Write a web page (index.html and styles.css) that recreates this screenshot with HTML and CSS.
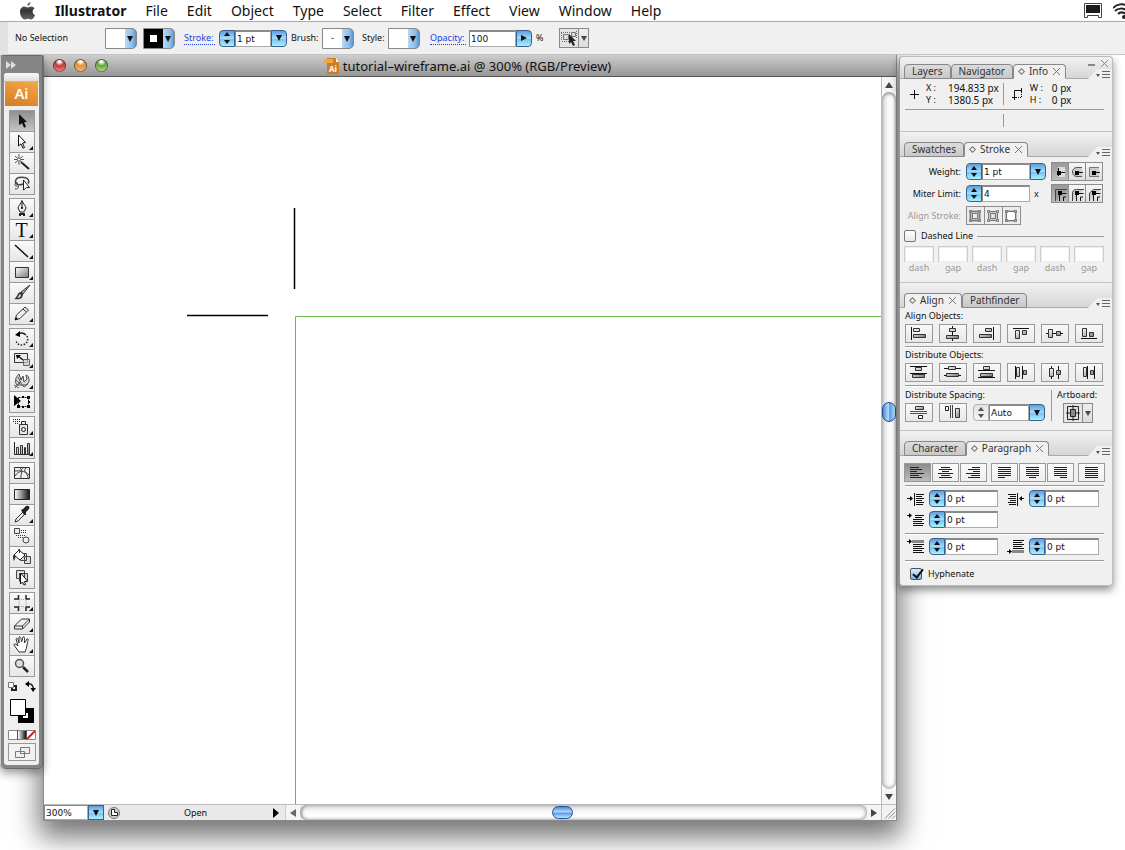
FILE: index.html
```html
<!DOCTYPE html>
<html lang="en">
<head>
<meta charset="utf-8">
<title>tutorial-wireframe.ai</title>
<link rel="stylesheet" href="styles.css">
</head>
<body>
<svg class="defs" aria-hidden="true">
  <defs>
    <linearGradient id="metal" x1="0" y1="0" x2="1" y2="1"><stop offset="0" stop-color="#fff"/><stop offset="1" stop-color="#777"/></linearGradient>
    <linearGradient id="fade"><stop offset="0" stop-color="#fff"/><stop offset="1" stop-color="#111"/></linearGradient>
    <linearGradient id="apple" x1="0" y1="0" x2="0" y2="1"><stop offset="0" stop-color="#777"/><stop offset=".5" stop-color="#333"/><stop offset="1" stop-color="#666"/></linearGradient>
  </defs>
</svg>

<header class="menubar">
  <button class="apple" aria-label="Apple menu"><svg width="17" height="18" viewBox="0 0 17 18"><path fill="url(#apple)" d="M11.500 0c.2 2-1.300 3.900-3.200 4C8 2.200 9.600.4 11.500 0zM12 4.500c1.500 0 2.700.7 3.500 1.900-2.800 1.700-2.300 5.400.6 6.600-.8 2-2.200 4.500-3.900 4.500-1.300 0-1.800-.8-3.300-.8s-2 .8-3.300.8C3.500 17.500 1 13.500 1 10s2.200-5.400 4.500-5.400c1.500 0 2.400.8 3.400.8s1.800-.9 3.100-.9z"/></svg></button>
  <nav class="menus">
    <button class="app-name">Illustrator</button><button>File</button><button>Edit</button><button>Object</button><button>Type</button><button>Select</button><button>Filter</button><button>Effect</button><button>View</button><button>Window</button><button>Help</button>
  </nav>
  <div class="status-icons">
    <svg width="18" height="16" viewBox="0 0 18 16"><path fill="#fff" stroke="#444" d="M.5.500h17v14h-3v-2h-11v2h-3z"/><path fill="#1c1c1c" d="M2 2h14v8H2z"/></svg>
    <svg width="12" height="16" viewBox="0 0 12 16" fill="none" stroke="#222" stroke-width="2"><path d="M0 5C4 1 10 0 15 3M2 8c3-3 8-3 11-1M5 11c2-2 5-2 8 0"/><circle cx="11" cy="14" r="1"/></svg>
  </div>
</header>

<section class="control-bar" aria-label="Control">
  <span class="selection">No Selection</span>
  <span class="pick swatch"><select aria-label="Fill"><option></option></select></span>
  <span class="pick swatch dark"><select aria-label="Stroke color"><option></option></select></span>
  <a class="dotted" href="#stroke">Stroke:</a>
  <span class="combo stroke-w"><span class="stepper"><button aria-label="Increase stroke"></button><button aria-label="Decrease stroke"></button></span><input aria-label="Stroke weight" value="1 pt"><button class="drop" aria-label="Stroke presets"></button></span>
  <label class="brush" for="brush">Brush:</label>
  <span class="pick swatch"><select id="brush"><option>-</option></select></span>
  <label class="style" for="style">Style:</label>
  <span class="pick swatch"><select id="style"><option></option></select></span>
  <a class="dotted opacity" href="#opacity">Opacity:</a>
  <span class="combo opacity-w"><input aria-label="Opacity" value="100"><button class="drop right" aria-label="Opacity slider"></button></span>
  <span class="percent">%</span>
  <button class="split" aria-label="Select similar objects"><svg width="18" height="18" viewBox="0 0 18 18"><path fill="#ddd" stroke="#777" d="M3.500 5.500h5v5h-5zM11.500 3.500h4v4h-4z"/><path stroke="#666" stroke-dasharray="1 1" d="M1 3.500h9M2 12.500h7M1.500 4v8M16.500 2v7"/><path fill="#222" d="m9 5 7 7-3 0 2 4-2 1-2-4-2 2z"/></svg><i></i></button>
</section>

<main class="workspace">
  <aside class="toolbox" aria-label="Tools">
    <div class="tool-head"><svg width="11" height="8" viewBox="0 0 11 8" fill="#ddd"><path d="m0 0 5 4-5 4zM5 0l5 4-5 4z"/></svg></div>
    <div class="tool-body">
      <div class="grip"></div>
      <div class="logo">Ai</div>
      <div class="tools">
        <button class="on" aria-label="Selection"><svg viewBox="0 0 24 20"><path fill="#111" d="m9 3 8 8-3 .3 2 4.500-2 1-2-4.500L9 14z"/></svg></button>
        <button class="more" aria-label="Direct Selection"><svg viewBox="0 0 24 20"><path fill="#fff" stroke="#111" d="m8.500 3 7 7.500-3 .5 2 4.500-1.500.7-2-4.400-2.500 2.200z"/></svg></button>
        <button aria-label="Magic Wand"><svg viewBox="0 0 24 20"><path stroke="#222" stroke-width="2" d="m11 9 8 7"/><path stroke="#555" d="M9 1v11M4 6.500h10M5 3l8 7M13 3l-8 7"/><circle cx="9" cy="6.500" r="1.500" fill="#fff" stroke="#777"/></svg></button>
        <button aria-label="Lasso"><svg viewBox="0 0 24 20" fill="none" stroke="#444"><path stroke-width="1.500" d="M13 10c-4 2-8 0-7.500-3C6 4 10 3 14 3.500s6 3 4 6"/><path d="M8 9c-4-1-4 4-1 3s1 4-2 3"/><path fill="#fff" stroke="#222" d="m13.500 6 6 7.500-3 0-3 2.500z"/></svg></button>
      </div>
      <div class="tools">
        <button class="more" aria-label="Pen"><svg viewBox="0 0 24 20"><path fill="#eee" stroke="#222" d="M12 1.500C13 5 16 7 16 9l-2 4h-4L8 9c0-2 3-4 4-7.500z"/><path stroke="#222" d="M12 3v6"/><circle cx="12" cy="9" r="1"/><path fill="#222" d="M9 14h6v3h-2v-1h-2v1H9z"/></svg></button>
        <button class="more type" aria-label="Type">T</button>
        <button class="more" aria-label="Line Segment"><svg viewBox="0 0 24 20"><path stroke="#111" stroke-width="1.500" d="m5 4 13 12"/></svg></button>
        <button class="more" aria-label="Rectangle"><svg viewBox="0 0 24 20"><path fill="url(#metal)" stroke="#333" d="M5.500 5.500h13v10h-13z"/></svg></button>
        <button aria-label="Paintbrush"><svg viewBox="0 0 24 20"><path fill="#aaa" stroke="#333" d="m20 2-9 7 2 2z"/><path fill="#333" d="M11 9c-4 0-3 5-7 7 5 1 9 0 9-5z"/><path fill="#ccc" d="M10 11c-2 1-1 3-3 4 3 0 4-1 4-3z"/></svg></button>
        <button class="more" aria-label="Pencil"><svg viewBox="0 0 24 20"><path fill="#eee" stroke="#333" d="m5 16 1.500-5L15 3l3.500 3L10 14.500z"/><path stroke="#333" fill="none" d="m13 5 3.500 3"/><path d="m5 16 1-3 2 2z"/></svg></button>
      </div>
      <div class="tools">
        <button class="more" aria-label="Rotate"><svg viewBox="0 0 24 20"><path fill="none" stroke="#222" stroke-width="1.500" d="M8 5c3-1.500 6-1 8 1"/><path fill="none" stroke="#222" stroke-width="1.500" stroke-dasharray="1.500 1.500" d="M17 7c4 9-10 13-11 4"/><path d="m5 6 5-4v6z"/></svg></button>
        <button class="more" aria-label="Scale"><svg viewBox="0 0 24 20"><path fill="#eee" stroke="#333" d="M4.500 3.500h13v9h-13z"/><path fill="#ccc" fill-opacity=".7" stroke="#666" d="M13.500 9.500h6v6h-6z"/><path stroke="#111" stroke-width="1.500" d="m8 6 5 4"/><path d="M6 5h5L7 9z"/></svg></button>
        <button class="more" aria-label="Warp"><svg viewBox="0 0 24 20"><path fill="#ddd" stroke="#444" d="M7 14c-3-4-1-8 2-11l2 6 2-4 1 6 3-3-1-4c4 1 4 8 0 10H9z"/><path fill="none" stroke="#555" d="m5 17 5-6 4 5 4-3M4 14l5 3M8 6l3 6M6 9l4 4"/></svg></button>
        <button aria-label="Free Transform"><svg viewBox="0 0 24 20"><path fill="none" stroke="#111" stroke-dasharray="2 1" d="M8.500 5.500h10v9h-10z"/><path d="M4 3v11l7-5zM17 4h3v3h-3zM12 4h2v2h-2zM17 13h3v3h-3zM12 14h2v2h-2zM18 9h2v2h-2zM7 13h3v3H7z"/></svg></button>
      </div>
      <div class="tools">
        <button class="more" aria-label="Symbol Sprayer"><svg viewBox="0 0 24 20"><path fill="#e6e6e6" stroke="#333" d="M9.500 7.500h8v10h-8zM11.500 4.500h4v3h-4z"/><circle cx="13.500" cy="12.500" r="2" fill="none" stroke="#222"/><path stroke="#222" stroke-dasharray="1 1" d="M3 2.500h8M3 4.500h8M5 6.500h3"/></svg></button>
        <button class="more" aria-label="Column Graph"><svg viewBox="0 0 24 20"><path fill="none" stroke="#222" d="M4.500 4v12.500H20"/><path fill="url(#metal)" stroke="#333" d="M6.500 9.500h2v7h-2zM10.500 7.500h2v9h-2zM14.500 9.500h1v7h-1zM17.500 5.500h2v11h-2z"/></svg></button>
      </div>
      <div class="tools">
        <button aria-label="Mesh"><svg viewBox="0 0 24 20"><path fill="#eee" stroke="#333" d="M4.500 4.500h15v11h-15z"/><path fill="none" stroke="#444" d="M5 13c4-6 9-6 14-1M10 5c4 3 0 7 1 10M16 5c-4 3 2 5 2 10M5 8c5 0 7-1 8-3"/></svg></button>
        <button aria-label="Gradient"><svg viewBox="0 0 24 20"><path fill="url(#fade)" stroke="#222" d="M4.500 5.500h15v10h-15z"/></svg></button>
        <button class="more" aria-label="Eyedropper"><svg viewBox="0 0 24 20"><path fill="#eee" stroke="#333" d="m5 17 1-3 7-7 2 2-7 7z"/><path fill="#222" d="m11 5 2-1 3-3c3-1 4 1 3 3l-3 3v3l-2 0z"/></svg></button>
        <button aria-label="Blend"><svg viewBox="0 0 24 20"><path fill="#eee" stroke="#444" d="M4.500 2.500h5v5h-5z"/><circle cx="16" cy="14" r="3" fill="#eee" stroke="#444"/><path stroke="#333" stroke-dasharray="1 1" d="M11 4.500h5M11 6.500h6M6 9.500h10M8 11.500h5"/></svg></button>
        <button aria-label="Live Paint Bucket"><svg viewBox="0 0 24 20"><path fill="#ddd" stroke="#444" d="M10.500 6.500h6v7h-6zM14.500 9.500h6v7h-6z"/><path fill="#fff" stroke="#222" d="m4 8 5-5 6 5-5 5z"/><path fill="#333" d="M3 8c0 3 0 4 1 6l2-5zM8 2h2v4H9V3z"/></svg></button>
        <button aria-label="Live Paint Selection"><svg viewBox="0 0 24 20"><path fill="#ddd" stroke="#444" d="M6.500 2.500h8v8h-8zM9.500 5.500h8v8h-8z"/><path fill="#fff" stroke="#111" d="m10.500 5 7 8-3 .5 1 3-1.500.5-1.500-3-2 2z"/></svg></button>
      </div>
      <div class="tools">
        <button class="more" aria-label="Crop Area"><svg viewBox="0 0 24 20"><path fill="none" stroke="#222" stroke-width="1.500" d="M4 6h4.500V2M20 6h-4V2M4 14h4.500v4M20 14h-4v4"/><path fill="none" stroke="#999" stroke-dasharray="1 1" d="M9 6.500h7v7H9z"/></svg></button>
        <button class="more" aria-label="Eraser"><svg viewBox="0 0 24 20"><path fill="#eee" stroke="#333" d="m4.500 12 7-7h8l-7 7zM4.500 12v3h8v-3M12.500 15l7-7V5"/></svg></button>
        <button class="more" aria-label="Hand"><svg viewBox="0 0 24 20"><path fill="#fff" stroke="#333" d="m9 17-5-7c0-2 2-1 4 1L6 4c1-2 2 0 3 4l0-6c1-1 2 0 2.500 5L13 2c2-1 1.500 1 1.500 6L17 4c2-1 1 1 0 6-.5 3-1 4-2 7z"/></svg></button>
        <button aria-label="Zoom"><svg viewBox="0 0 24 20"><path stroke="#222" stroke-width="2.500" d="m13 11 5 5"/><circle cx="9.500" cy="7.500" r="4" fill="#ddd" stroke="#555" stroke-width="1.500"/></svg></button>
      </div>
      <div class="swap">
        <button aria-label="Default Fill and Stroke"><svg width="11" height="11" viewBox="0 0 11 11"><path fill="#fff" stroke="#222" stroke-width="2" d="M5 5h4v4H5z"/><path fill="#fff" stroke="#777" d="M1.500 1.500h5v5h-5z"/></svg></button>
        <button aria-label="Swap Fill and Stroke"><svg width="11" height="11" viewBox="0 0 11 11"><path fill="none" stroke="#222" stroke-width="1.500" d="M2 3c4-1 6 1 6.500 5"/><path d="m0 3 4-3v6zM5.500 7h5.500l-3 4z"/></svg></button>
      </div>
      <button class="fill-stroke" aria-label="Fill and Stroke"><svg width="26" height="25" viewBox="0 0 26 25"><path d="M9 9h16v15H9z"/><path fill="#fff" d="M14 14h5v5h-5z"/><path fill="#fff" stroke="#000" d="M1.500.500h15v16h-15z"/></svg></button>
      <button class="modes" aria-label="Color, Gradient, None"><svg width="28" height="10" viewBox="0 0 28 10"><path fill="#fff" stroke="#888" d="M.5.500h27v9h-27z"/><path fill="url(#fade)" d="M10 1h8v8h-8z"/><path stroke="#c22" stroke-width="2" d="m19 9 8-8"/><path stroke="#555" d="M9.500 0v10M18.500 0v10"/></svg></button>
      <button class="screen" aria-label="Screen mode"><svg width="16" height="13" viewBox="0 0 16 13"><path fill="#eee" stroke="#777" d="M6.500 1.500h9v6h-9zM1.500 5.500h9v6h-9z"/></svg></button>
    </div>
  </aside>

  <section class="document">
    <div class="titlebar">
      <div class="lights"><button class="red" aria-label="Close"></button><button class="amber" aria-label="Minimize"></button><button class="green" aria-label="Zoom window"></button></div>
      <h1><svg width="16" height="16" viewBox="0 0 16 16"><path fill="#d07c25" d="M3 0h9l3 4v12H3z"/><path fill="#f0a647" d="M0 1h9v4H0z"/><path fill="#fff" d="m12 0 3 4h-3z"/><text x="5" y="14" font-family="Open Sans, sans-serif" font-size="8" font-weight="700" fill="#fff">Ai</text></svg>tutorial–wireframe.ai @ 300% (RGB/Preview)</h1>
    </div>
    <div class="view">
      <svg class="canvas" role="img" aria-label="Artboard">
        <path fill="none" stroke="#000" stroke-width="1.500" d="M250.500 131v81M143 238.500h81"/>
        <line x1="251.500" y1="239.500" x2="100%" y2="239.500" stroke="#64b846"/>
        <line x1="251.500" y1="239.500" x2="251.500" y2="100%" stroke="#64b846"/>
      </svg>
      <div class="vscroll"><span class="arrow up"></span><div class="vtrack"><span class="thumb"></span></div><span class="arrow down"></span></div>
    </div>
    <div class="bottom">
      <div class="status">
        <input aria-label="Zoom level" value="300%"><button class="drop" aria-label="Zoom presets"></button>
        <svg width="12" height="12" viewBox="0 0 12 12"><circle cx="6" cy="6" r="5.500" fill="#ccc" stroke="#777"/><path fill="#fff" stroke="#222" d="M3.500 2.500h3v3h3v3h-6z"/></svg>
        <span class="open">Open</span><i></i>
      </div>
      <div class="hscroll"><span class="arrow left"></span><div class="htrack"><span class="thumb"></span></div><span class="arrow next"></span></div>
      <svg class="resize" width="15" height="15" viewBox="0 0 15 15"><path stroke="#888" d="M3 14 14 3M7 14l7-7M11 14l3-3"/></svg>
    </div>
  </section>

  <aside class="panels">
    <section class="panel info">
      <div class="window-buttons"><svg width="20" height="9" viewBox="0 0 20 9" fill="none" stroke="#888"><path stroke-width="2" d="M0 6h7"/><path d="m13 1 7 7M20 1l-7 7"/></svg></div>
      <div class="tabs"><button>Layers</button><button>Navigator</button><button class="active"><i class="updown"></i>Info<i class="x"></i></button><span class="flap"></span></div>
      <div class="info-row">
        <svg width="9" height="9" viewBox="0 0 9 9"><path stroke="#111" d="M4.500 0v9M0 4.500h9"/></svg>
        <dl><dt>X :</dt><dd>194.833 px</dd><dt>Y :</dt><dd>1380.5 px</dd></dl>
        <svg class="size" width="11" height="12" viewBox="0 0 11 12"><path fill="none" stroke="#111" d="M2.500 12V2.500H9M0 9.500h4M9.500 0v4"/><path fill="none" stroke="#111" stroke-dasharray="1 1" d="M4 9.500h5.500V4"/></svg>
        <dl><dt>W :</dt><dd>0 px</dd><dt>H :</dt><dd>0 px</dd></dl>
      </div>
      <div class="info-foot"></div>
    </section>

    <section class="panel stroke" id="stroke">
      <div class="tabs"><button>Swatches</button><button class="active"><i class="updown"></i>Stroke<i class="x"></i></button><span class="flap"></span></div>
      <div class="stroke-grid">
        <label for="weight">Weight:</label>
        <span class="combo"><span class="stepper"><button aria-label="Increase weight"></button><button aria-label="Decrease weight"></button></span><input id="weight" value="1 pt"><button class="drop" aria-label="Weight presets"></button></span>
        <span class="seg"><button class="on" aria-label="Butt cap"><svg viewBox="0 0 16 16"><path fill="#ddd" d="M6 3h7v10H6z"/><path fill="none" stroke="#111" d="M6.500 4v8M7 8.500h6"/><path d="M5 7h4v4H5z"/></svg></button><button aria-label="Round cap"><svg viewBox="0 0 16 16"><path fill="#ccc" stroke="#555" d="M13 3.500H8c-6 0-6 9 0 9h5"/><path stroke="#111" d="M8 8.500h6"/><path d="M6 7h4v4H6z"/></svg></button><button aria-label="Projecting cap"><svg viewBox="0 0 16 16"><path fill="#ccc" stroke="#777" d="M13 3.500H3.500v9H13"/><path stroke="#111" d="M8 8.500h6"/><path d="M6 7h4v4H6z"/></svg></button></span>
        <label for="miter">Miter Limit:</label>
        <span class="combo"><span class="stepper"><button aria-label="Increase limit"></button><button aria-label="Decrease limit"></button></span><input id="miter" value="4"><span class="times">x</span></span>
        <span class="seg"><button class="on" aria-label="Miter join"><svg viewBox="0 0 16 16"><path fill="#999" stroke="#444" d="M3.500 15V3.500H15"/><path fill="none" stroke="#111" d="M7.500 15V7.500h7M11.500 15v-4H14"/><path d="M6 5h4v4H6z"/></svg></button><button aria-label="Round join"><svg viewBox="0 0 16 16"><path fill="#ccc" stroke="#444" d="M3.500 15V8c0-3 1-4.500 4-4.500H15"/><path fill="none" stroke="#111" d="M7.500 15V7.500h7M11.500 15v-4H14"/><path d="M6 5h4v4H6z"/></svg></button><button aria-label="Bevel join"><svg viewBox="0 0 16 16"><path fill="#ccc" stroke="#444" d="M3.500 15V7l4-3.500H15"/><path fill="none" stroke="#111" d="M7.500 15V7.500h7M11.500 15v-4H14"/><path d="M6 5h4v4H6z"/></svg></button></span>
        <span class="dim">Align Stroke:</span>
        <span class="seg dim-seg"><button disabled aria-label="Align center"><svg viewBox="0 0 16 16"><path fill="none" stroke="#bbb" stroke-width="4" d="M4 4h8v8H4z"/><path fill="none" stroke="#777" d="M5.500 5.500h5v5h-5zM2.500 2.500h2v2h-2zM11.500 2.500h2v2h-2zM2.500 11.500h2v2h-2zM11.500 11.500h2v2h-2zM5 3.500h6M5 12.500h6M3.500 5v6M12.500 5v6"/></svg></button><button disabled aria-label="Align inside"><svg viewBox="0 0 16 16"><path fill="none" stroke="#ccc" stroke-width="3" d="M5 5h6v6H5z"/><path fill="none" stroke="#777" d="M5.500 5.500h5v5h-5zM2.500 2.500h2v2h-2zM11.500 2.500h2v2h-2zM2.500 11.500h2v2h-2zM11.500 11.500h2v2h-2zM5 3.500h6M5 12.500h6M3.500 5v6M12.500 5v6"/></svg></button><button disabled aria-label="Align outside"><svg viewBox="0 0 16 16"><path fill="#fff" stroke="#bbb" stroke-width="2" d="M3 3h10v10H3z"/><path fill="none" stroke="#777" d="M2.500 2.500h2v2h-2zM11.500 2.500h2v2h-2zM2.500 11.500h2v2h-2zM11.500 11.500h2v2h-2zM5 3.500h6M5 12.500h6M3.500 5v6M12.500 5v6"/></svg></button></span>
      </div>
      <label class="dashed"><input type="checkbox">Dashed Line<i></i></label>
      <div class="dashes">
        <label><input disabled>dash</label><label><input disabled>gap</label><label><input disabled>dash</label><label><input disabled>gap</label><label><input disabled>dash</label><label><input disabled>gap</label>
      </div>
    </section>

    <section class="panel align">
      <div class="tabs"><button class="active"><i class="updown"></i>Align<i class="x"></i></button><button>Pathfinder</button><span class="flap"></span></div>
      <h2>Align Objects:</h2>
      <div class="six">
        <button aria-label="Align left"><svg viewBox="0 0 26 17"><path stroke="#111" d="M5.500 2v13"/><path fill="url(#metal)" stroke="#333" d="M7.500 3.500h6v3h-6zM7.500 9.500h12v3h-12z"/></svg></button>
        <button aria-label="Align horizontal center"><svg viewBox="0 0 26 17"><path stroke="#111" d="M12.500 1v15"/><path fill="url(#metal)" stroke="#333" d="M9.500 3.500h6v3h-6zM6.500 10.500h12v3h-12z"/></svg></button>
        <button aria-label="Align right"><svg viewBox="0 0 26 17"><path stroke="#111" d="M19.500 2v13"/><path fill="url(#metal)" stroke="#333" d="M11.500 3.500h6v3h-6zM5.500 9.500h12v3h-12z"/></svg></button>
        <button aria-label="Align top"><svg viewBox="0 0 26 17"><path stroke="#111" d="M5 3.500h16"/><path fill="url(#metal)" stroke="#333" d="M7.500 5.500h4v8h-4zM14.500 5.500h4v4h-4z"/></svg></button>
        <button aria-label="Align vertical center"><svg viewBox="0 0 26 17"><path stroke="#111" d="M4 8.500h17"/><path fill="url(#metal)" stroke="#333" d="M6.500 4.500h4v8h-4zM14.500 6.500h4v4h-4z"/></svg></button>
        <button aria-label="Align bottom"><svg viewBox="0 0 26 17"><path stroke="#111" d="M5 13.500h16"/><path fill="url(#metal)" stroke="#333" d="M6.500 3.500h4v8h-4zM13.500 7.500h4v4h-4z"/></svg></button>
      </div>
      <hr>
      <h2>Distribute Objects:</h2>
      <div class="six">
        <button aria-label="Distribute top"><svg viewBox="0 0 26 17"><path stroke="#111" d="M4 2.500h17M4 9.500h17"/><path fill="url(#metal)" stroke="#333" d="M9.500 3.500h6v3h-6zM6.500 10.500h12v3h-12z"/></svg></button>
        <button aria-label="Distribute vertical center"><svg viewBox="0 0 26 17"><path stroke="#111" d="M4 4.500h17M4 11.500h17"/><path fill="url(#metal)" stroke="#333" d="M8.500 2.500h7v3h-7zM6.500 9.500h12v3h-12z"/></svg></button>
        <button aria-label="Distribute bottom"><svg viewBox="0 0 26 17"><path stroke="#111" d="M4 6.500h17M4 13.500h17"/><path fill="url(#metal)" stroke="#333" d="M9.500 2.500h6v3h-6zM6.500 9.500h12v3h-12z"/></svg></button>
        <button aria-label="Distribute left"><svg viewBox="0 0 26 17"><path stroke="#111" d="M7.500 2v13M14.500 2v13"/><path fill="url(#metal)" stroke="#333" d="M8.500 3.500h3v9h-3zM15.500 6.500h3v4h-3z"/></svg></button>
        <button aria-label="Distribute horizontal center"><svg viewBox="0 0 26 17"><path stroke="#111" d="M9.500 2v13M16.500 2v13"/><path fill="url(#metal)" stroke="#333" d="M7.500 4.500h4v8h-4zM14.500 6.500h4v4h-4z"/></svg></button>
        <button aria-label="Distribute right"><svg viewBox="0 0 26 17"><path stroke="#111" d="M11.500 2v13M18.500 2v13"/><path fill="url(#metal)" stroke="#333" d="M7.500 3.500h3v9h-3zM14.500 6.500h3v4h-3z"/></svg></button>
      </div>
      <hr>
      <div class="spacing">
        <div>
          <h2>Distribute Spacing:</h2>
          <div class="spacing-row">
            <button class="wide" aria-label="Vertical distribute space"><svg viewBox="0 0 26 17"><path stroke="#555" d="M4 7.500h17M4 9.500h17"/><path fill="url(#metal)" stroke="#333" d="M9.500 2.500h8v3h-8z"/><path fill="#fff" stroke="#222" d="M12.500 11.500h4v3h-4z"/></svg></button>
            <button class="wide" aria-label="Horizontal distribute space"><svg viewBox="0 0 26 17"><path stroke="#444" d="M10.500 1v13M12.500 1v13"/><path fill="#fff" stroke="#222" d="M5.500 2.500h3v4h-3z"/><path fill="url(#metal)" stroke="#333" d="M15.500 4.500h4v9h-4z"/></svg></button>
            <span class="combo"><span class="stepper gray"><button aria-label="Increase spacing"></button><button aria-label="Decrease spacing"></button></span><input aria-label="Spacing" value="Auto"><button class="drop" aria-label="Spacing presets"></button></span>
          </div>
        </div>
        <div class="artboard">
          <h2>Artboard:</h2>
          <button class="split" aria-label="Align to artboard"><svg width="18" height="18" viewBox="0 0 18 18"><path fill="#ddd" stroke="#222" d="M3.500 2.500h11v13h-11z"/><path fill="#888" stroke="#222" d="M6.500 5.500h5v7h-5z"/><path stroke="#222" d="M9 1v4M9 13v4M2 9h4M12 9h4"/></svg><i></i></button>
        </div>
      </div>
    </section>

    <section class="panel paragraph">
      <div class="tabs"><button>Character</button><button class="active"><i class="updown"></i>Paragraph<i class="x"></i></button><span class="flap"></span></div>
      <div class="justify">
        <button class="on" aria-label="Align text left"><svg viewBox="0 0 25 17"><path stroke="#222" d="M5 3.500h9M5 5.500h12M5 7.500h7M5 9.500h14M5 11.500h9M5 13.500h12"/></svg></button>
        <button aria-label="Align text center"><svg viewBox="0 0 25 17"><path stroke="#222" d="M8 3.500h9M6 5.500h13M9 7.500h7M5 9.500h15M8 11.500h9M6 13.500h13"/></svg></button>
        <button aria-label="Align text right"><svg viewBox="0 0 25 17"><path stroke="#222" d="M11 3.500h8M7 5.500h12M12 7.500h7M5 9.500h14M10 11.500h9M7 13.500h12"/></svg></button>
        <button class="gap" aria-label="Justify, last left"><svg viewBox="0 0 25 17"><path stroke="#222" d="M6 3.500h13M6 5.500h13M6 7.500h13M6 9.500h13M6 11.500h13M6 13.500h7"/></svg></button>
        <button aria-label="Justify, last centered"><svg viewBox="0 0 25 17"><path stroke="#222" d="M6 3.500h13M6 5.500h13M6 7.500h13M6 9.500h13M6 11.500h13M9 13.500h7"/></svg></button>
        <button aria-label="Justify, last right"><svg viewBox="0 0 25 17"><path stroke="#222" d="M6 3.500h13M6 5.500h13M6 7.500h13M6 9.500h13M6 11.500h13M12 13.500h7"/></svg></button>
        <button class="gap" aria-label="Justify all"><svg viewBox="0 0 25 17"><path stroke="#222" d="M6 3.500h13M6 5.500h13M6 7.500h13M6 9.500h13M6 11.500h13M6 13.500h13"/></svg></button>
      </div>
      <hr>
      <div class="indents">
        <span class="field"><svg viewBox="0 0 18 16"><path stroke="#111" d="M0 7.500h4M7.500 2v13M9 3.500h8M9 5.500h6M9 7.500h8M9 9.500h6M9 11.500h8M9 13.500h7"/><path d="m3 5 3 2.500L3 10z"/></svg><span class="stepper"><button aria-label="Increase"></button><button aria-label="Decrease"></button></span><input aria-label="Left indent" value="0 pt"></span>
        <span class="field"><svg viewBox="0 0 18 16"><path stroke="#111" d="M13 7.500h4M10.500 2v13M1 3.500h8M3 5.500h6M1 7.500h8M3 9.500h6M1 11.500h8M2 13.500h7"/><path d="m15 5-3 2.500 3 2.500z"/></svg><span class="stepper"><button aria-label="Increase"></button><button aria-label="Decrease"></button></span><input aria-label="Right indent" value="0 pt"></span>
        <span class="field"><svg viewBox="0 0 18 16"><path stroke="#111" d="M0 3.500h3M8 3.500h9M8 5.500h7M6 7.500h11M6 9.500h9M6 11.500h11M6 13.500h10"/><path d="m2 1 3 2.500L2 6z"/></svg><span class="stepper"><button aria-label="Increase"></button><button aria-label="Decrease"></button></span><input aria-label="First-line indent" value="0 pt"></span>
      </div>
      <hr>
      <div class="indents">
        <span class="field"><svg viewBox="0 0 18 16"><path fill="#888" d="M5 1h12v3H5z"/><path stroke="#111" d="M0 2.500h3M6 5.500h11M6 7.500h9M6 9.500h11M6 11.500h9M6 13.500h11"/><path d="m2 0 3 2.500L2 5z"/></svg><span class="stepper"><button aria-label="Increase"></button><button aria-label="Decrease"></button></span><input aria-label="Space before" value="0 pt"></span>
        <span class="field"><svg viewBox="0 0 18 16"><path fill="#888" d="M5 11h12v3H5z"/><path stroke="#111" d="M0 12.500h3M6 1.500h11M6 3.500h9M6 5.500h11M6 7.500h9M6 9.500h11"/><path d="m2 10 3 2.500L2 15z"/></svg><span class="stepper"><button aria-label="Increase"></button><button aria-label="Decrease"></button></span><input aria-label="Space after" value="0 pt"></span>
      </div>
      <hr>
      <label class="hyphenate"><input type="checkbox" checked>Hyphenate</label>
    </section>
  </aside>
</main>
</body>
</html>
```
FILE: styles.css
```css
* { box-sizing: border-box; }
body {
  margin: 0;
  height: 100vh;
  display: flex;
  flex-direction: column;
  overflow: hidden;
  background: #fff;
  color: #111;
  font: 9px/12px "Noto Sans", "Open Sans", sans-serif;
}
button, input, select { font: inherit; color: inherit; margin: 0; padding: 0; border: 0; border-radius: 0; }
button { background: none; display: block; }
svg { display: block; flex: none; }
.defs { position: absolute; width: 0; height: 0; }
h1, h2, dl, dd { margin: 0; font-weight: 400; }
h2 { font-size: 9px; line-height: 12px; }

/* Menu bar */
.menubar { display: flex; align-items: center; flex: none; height: 22px; padding-left: 19px; border-bottom: 1px solid #aaa; font-size: 14px; line-height: 20px; }
.menus { display: flex; gap: 19px; margin-left: 19px; flex: 1; }
.app-name { font-weight: 700; }
.status-icons { display: flex; gap: 11px; }

/* Control bar */
.control-bar { position: relative; z-index: 3; display: flex; align-items: center; flex: none; height: 33px; padding-left: 7px; background: #f0f0f0; border-left: 8px solid #e2e2e2; border-bottom: 1px solid #c4c4c4; }
.selection { width: 90px; }
.pick { position: relative; display: block; width: 32px; height: 21px; }
.pick select { appearance: none; display: block; width: 100%; height: 100%; padding: 0 17px 0 8px; border: 1px solid #888; border-radius: 0 5px 5px 0; background: linear-gradient(90deg, #fff 19px, #b8d8f2 19px, #8cc0ec 26px, #5a94cf) ; }
.pick::after { content: ""; position: absolute; right: 4px; top: 8px; border: 3px solid transparent; border-top: 6px solid #111; border-bottom: 0; pointer-events: none; }
.dark { margin-left: 6px; }
.dark select { background: conic-gradient(#fff 0 0) 6px 6px / 7px 7px no-repeat, linear-gradient(90deg, #000 19px, #b8d8f2 19px, #8cc0ec 26px, #5a94cf); }
.dotted { color: #1b3fe0; text-decoration: none; border-bottom: 1px dotted #1b3fe0; line-height: 13px; }
.control-bar .dotted { margin-left: 9px; width: 31px; }
.control-bar .stroke-w { margin-left: 4px; width: 68px; }
.brush { margin-left: 4px; width: 31px; }
.style { margin-left: 8px; width: 26px; }
.control-bar .opacity { margin-left: 10px; width: 36px; }
.control-bar .opacity-w { margin-left: 3px; width: 63px; }
.percent { margin-left: 4px; width: 23px; }
.split { display: flex; height: 20px; border: 1px solid #888; background: #e4e4e4; }
.split i { width: 10px; border-left: 1px solid #888; background: linear-gradient(#eee, #ddd); display: grid; place-items: center; }
.split i::before { content: ""; border: 3px solid transparent; border-top: 5px solid #444; border-bottom: 0; }

/* Value fields */
.combo, .field { display: flex; align-items: center; height: 17px; }
.combo input, .field input, .status input { flex: 1; min-width: 0; height: 17px; padding-left: 1px; border: 1px solid #aaa; border-top: 2px solid #8a8a8a; border-left-color: #888; background: #fff; font: 9px/12px "DejaVu Sans", sans-serif; }
.stepper { flex: none; display: grid; width: 16px; height: 17px; border: 1px solid #39618c; border-radius: 4px 0 0 4px; background: linear-gradient(#5b9fe0, #a5dbfa 50%, #72bdf0 51%, #a6f2ff); }
.stepper button { display: grid; place-items: center; }
.stepper button::before { content: ""; border: 3px solid transparent; border-bottom: 4px solid #111; border-top: 0; }
.stepper button + button::before { border-bottom: 0; border-top: 4px solid #111; }
.stepper.gray { border-color: #999; background: linear-gradient(#ddd, #f7f7f7); opacity: .7; }
.drop { flex: none; width: 16px; height: 17px; display: grid; place-items: center; border: 1px solid #39618c; border-radius: 0 4px 4px 0; background: linear-gradient(#5b9fe0, #a5dbfa 50%, #72bdf0 51%, #a6f2ff); }
.drop::before { content: ""; border: 3px solid transparent; border-top: 6px solid #111; border-bottom: 0; }
.drop.right::before { border: 3px solid transparent; border-left: 6px solid #111; border-right: 0; }

/* Workspace */
.workspace { display: flex; flex: 1; align-items: flex-start; min-height: 0; }

/* Toolbox */
.toolbox { position: relative; z-index: 2; flex: none; width: 43px; padding: 2px 4px 4px; background: #858585; border-radius: 2px 2px 5px 5px; box-shadow: inset 1px 0 #ccc, inset 0 0 0 1px #6a6a6a, 0 4px 10px rgba(0, 0, 0, .4); }
.tool-head { height: 16px; padding: 4px 2px; }
.tool-body { display: flex; flex-direction: column; align-items: center; gap: 3px; padding-bottom: 4px; background: #efefef; border-radius: 3px; }
.grip { align-self: stretch; height: 9px; background: linear-gradient(#fafafa, #ddd); border-bottom: 1px solid #bbb; border-radius: 3px 3px 0 0; margin-bottom: -3px; }
.logo { align-self: stretch; height: 24px; margin: 0 1px; background: linear-gradient(15deg, #d67a26, #f3a845); color: #fff; text-align: center; font: 600 15px/23px "Open Sans", sans-serif; margin-bottom: 1px; }
.tools { display: grid; gap: 1px; width: 26px; padding: 1px; background: #999; }
.tools button { position: relative; width: 24px; height: 20px; background: linear-gradient(#fafafa, #e6e6e6); }
.tools .on { background: linear-gradient(#8f8f8f, #c4c4c4); }
.tools .more::after { content: ""; position: absolute; right: 1px; bottom: 2px; border: 2px solid #111; border-top-color: transparent; border-left-color: transparent; }
.tools .type { font: 400 20px/20px "Liberation Serif", serif; }
.swap { display: flex; gap: 7px; margin: 1px 0 4px; }
.fill-stroke { margin-bottom: 3px; }
.screen { display: grid; place-items: center; width: 28px; height: 18px; border: 1px solid #999; background: #f2f2f2; }

/* Document window */
.document { position: relative; z-index: 1; flex: 1; min-width: 0; align-self: stretch; display: flex; flex-direction: column; margin-bottom: 29px; border: 1px solid #888; border-top: 0; box-shadow: 0 12px 26px 4px rgba(0, 0, 0, .55); background: #fff; }
.titlebar { display: flex; align-items: center; flex: none; height: 22px; padding: 0 9px; background: linear-gradient(#cdcdcd, #979797); border-bottom: 1px solid #555; }
.lights { display: flex; gap: 8px; width: 60px; }
.lights button { width: 13px; height: 13px; border: 1px solid rgba(0, 0, 0, .5); border-radius: 50%; }
.red { background: radial-gradient(circle at 50% 15%, #fff 8%, #c93434 40%, #f99 100%); }
.amber { background: radial-gradient(circle at 50% 15%, #fff 8%, #dc8f37 40%, #fdc98a 100%); }
.green { background: radial-gradient(circle at 50% 15%, #fff 8%, #66a03a 40%, #cdf09b 100%); }
.titlebar h1 { flex: 1; display: flex; justify-content: center; align-items: center; gap: 3px; padding-right: 65px; font-size: 13px; line-height: 20px; white-space: nowrap; }
.view { display: flex; flex: 1; min-height: 0; }
.canvas { flex: 1; min-width: 0; height: 100%; }
.vscroll { display: flex; flex-direction: column; flex: none; width: 15px; border-left: 1px solid #bbb; }
.arrow { flex: none; display: grid; place-items: center; width: 14px; height: 15px; background: #f4f4f4; }
.arrow::before { content: ""; border: 4px solid transparent; }
.up::before { border-top: 0; border-bottom: 6px solid #444; }
.down::before { border-bottom: 0; border-top: 6px solid #444; }
.left::before { border-left: 0; border-right: 6px solid #666; }
.next::before { border-right: 0; border-left: 6px solid #444; }
.vtrack { flex: 1; display: flex; flex-direction: column; padding-top: 310px; border-radius: 7px; background: linear-gradient(90deg, #d8d8d8, #f6f6f6 40%, #fff 70%, #eee); box-shadow: inset 0 2px 3px #999, inset 0 -2px 3px #bbb; }
.thumb { display: block; width: 14px; height: 20px; border: 1px solid #1e4ea0; border-radius: 7px; background: linear-gradient(90deg, #4f86d2, #b9dcfb 45%, #5b98e4 55%, #b3ecff); }
.bottom { display: flex; flex: none; height: 16px; border-top: 1px solid #bbb; background: #e9e9e9; }
.status { display: flex; align-items: center; flex: none; width: 241px; }
.status input { flex: none; width: 44px; height: 15px; border-width: 1px; }
.status .drop { height: 15px; border-radius: 0; margin-right: 4px; }
.open { flex: 1; text-align: center; padding-right: 2px; }
.status i { margin-right: 6px; border: 5px solid transparent; border-left: 6px solid #000; border-right: 0; }
.hscroll { display: flex; flex: 1; border-left: 1px solid #ccc; }
.htrack { flex: 1; display: grid; place-items: center; padding-right: 42px; border-radius: 7px; background: linear-gradient(#d8d8d8, #f6f6f6 40%, #fff 70%, #eee); box-shadow: inset 2px 0 3px #999, inset -2px 0 3px #bbb; }
.htrack .thumb { width: 21px; height: 13px; background: linear-gradient(#4f86d2, #b9dcfb 45%, #5b98e4 55%, #b3ecff); }
.resize { background: #f2f2f2; border-left: 1px solid #bbb; }

/* Panels */
.panels { position: relative; z-index: 2; flex: none; width: 214px; margin: 1px 12px 0 2px; background: #f0f0f0; border: 1px solid #bbb; border-left-color: #999; border-radius: 4px; box-shadow: 0 4px 9px rgba(0, 0, 0, .45); }
.panel { position: relative; border-bottom: 1px solid #c2c2c2; }
.panel:last-child { border-bottom: 0; }
.window-buttons { position: absolute; right: 4px; top: 2px; }
.tabs { display: flex; align-items: flex-end; height: 25px; padding-left: 4px; background: linear-gradient(#f2f2f2, #d4d4d4); box-shadow: inset 0 -1px #aaa; border-radius: 4px 4px 0 0; }
.info .tabs { height: 22px; }
.tabs button { display: flex; align-items: center; gap: 5px; height: 15px; padding: 0 7px; border: 1px solid #888; border-radius: 4px 4px 0 0; background: linear-gradient(#dcdcdc, #c8c8c8); font-size: 10px; line-height: 13px; color: #333; }
.tabs .active { border-bottom-color: #f0f0f0; background: #f0f0f0; padding: 0 5px; }
.updown { width: 5px; height: 5px; border: 1px solid #777; transform: rotate(45deg); }
.x { width: 7px; height: 7px; background: linear-gradient(45deg, transparent 45%, #777 45% 55%, transparent 55%), linear-gradient(-45deg, transparent 45%, #777 45% 55%, transparent 55%); }
.flap { position: relative; width: 24px; height: 10px; margin-left: auto; background: #f0f0f0; clip-path: polygon(9px 0, 100% 0, 100% 100%, 0 100%); }
.flap::before { content: ""; position: absolute; left: 8px; top: 5px; border: 2px solid transparent; border-top: 3px solid #555; border-bottom: 0; }
.flap::after { content: ""; position: absolute; left: 14px; top: 2px; width: 8px; height: 7px; background: repeating-linear-gradient(#666 0 1px, transparent 1px 3px); }
hr { height: 2px; margin: 0 8px 0 5px; border: 0; border-top: 1px solid #999; background: #fff; }

.info-row { display: flex; align-items: center; height: 31px; margin: 0 8px 0 5px; padding: 0 5px; border-bottom: 1px solid #999; background: linear-gradient(#999, #999) 98px 4px / 1px 22px no-repeat; }
.info dl { display: grid; grid-template-columns: 22px auto; font-size: 10px; line-height: 12px; }
.info dt { font-size: 9px; }
.info svg + dl { margin-left: 7px; }
.info .size { margin-left: 13px; }
.info-foot { height: 21px; background: linear-gradient(#999, #999) 103px 4px / 1px 13px no-repeat; }

.stroke-grid { display: grid; grid-template-columns: 57px 80px 54px; column-gap: 5px; row-gap: 3px; padding: 5px 0 0 4px; align-items: center; text-align: right; }
.stroke-grid .combo { text-align: left; }
.times { width: 16px; padding-left: 4px; }
.seg { display: grid; grid-template-columns: repeat(3, 16px); gap: 1px; width: max-content; padding: 1px; background: #8d8d8d; height: 19px; }
.seg button { background: linear-gradient(#f6f6f6, #ddd); }
.seg .on { background: linear-gradient(#999, #bbb); }
.seg svg { width: 16px; height: 16px; }
.dim-seg { grid-template-columns: 17px 17px 17px; }
.dim-seg button { background: #ececec; }
.dim { color: #999; white-space: nowrap; }
.dashed { display: flex; align-items: center; height: 12px; margin: 5px 8px 0 4px; }
.dashed i { flex: 1; height: 1px; margin-left: 4px; background: #999; }
input[type="checkbox"] { appearance: none; width: 12px; height: 12px; border: 1px solid #777; border-radius: 2px; background: linear-gradient(#fff, #e8e8e8); }
.dashed input { margin-right: 5px; }
.dashes { display: grid; grid-template-columns: repeat(6, 30px); gap: 4px; padding: 4px 0 8px 4px; color: #999; text-align: center; }
.dashes label { display: grid; }
.dashes input { width: 30px; height: 16px; border: 1px solid #ccc; border-bottom: 0; background: #fff; box-shadow: inset 0 0 0 1px #eee; }

.align h2 { padding: 2px 0 0 5px; white-space: nowrap; }
.align hr + h2 { padding-top: 1px; }
.align h2 + .six { padding-top: 2px; }
.six { display: grid; grid-template-columns: repeat(6, 28px); gap: 6px; padding: 0 0 3px 5px; }
.six button, .wide { width: 28px; height: 19px; border: 1px solid #999; background: linear-gradient(#f8f8f8, #e8e8e8); }
.six svg, .wide svg { width: 26px; height: 17px; }
.spacing { display: flex; height: 43px; }
.spacing-row { display: flex; gap: 6px; padding: 2px 0 0 5px; }
.spacing .combo { width: 72px; margin-top: 1px; }
.artboard { margin: 3px 0 0 6px; height: 31px; border-left: 1px solid #999; }
.artboard h2 { padding-top: 0; margin-top: -1px; }
.artboard .split { margin: 2px 0 0 11px; }

.justify { display: flex; gap: 1px; padding: 7px 0 3px 4px; }
.justify button { width: 27px; height: 19px; border: 1px solid #999; background: linear-gradient(#fafafa, #eee); }
.justify .on { background: linear-gradient(#8c8c8c, #bbb); }
.justify .gap { margin-left: 3px; }
.justify svg { width: 25px; height: 17px; }
.indents { display: grid; grid-template-columns: 91px 92px; column-gap: 9px; row-gap: 4px; padding: 3px 0 5px 7px; }
.field svg { width: 18px; height: 16px; }
.field .stepper { margin-left: 4px; }
.hyphenate { display: flex; align-items: center; gap: 6px; height: 23px; padding-left: 10px; }
.hyphenate input { background: linear-gradient(#dcecfb, #7fb2e6); border-color: #456; position: relative; }
.hyphenate input::after { content: ""; position: absolute; left: 4px; top: -2px; width: 4px; height: 9px; border: solid #111; border-width: 0 2px 2px 0; transform: rotate(38deg); }
```
